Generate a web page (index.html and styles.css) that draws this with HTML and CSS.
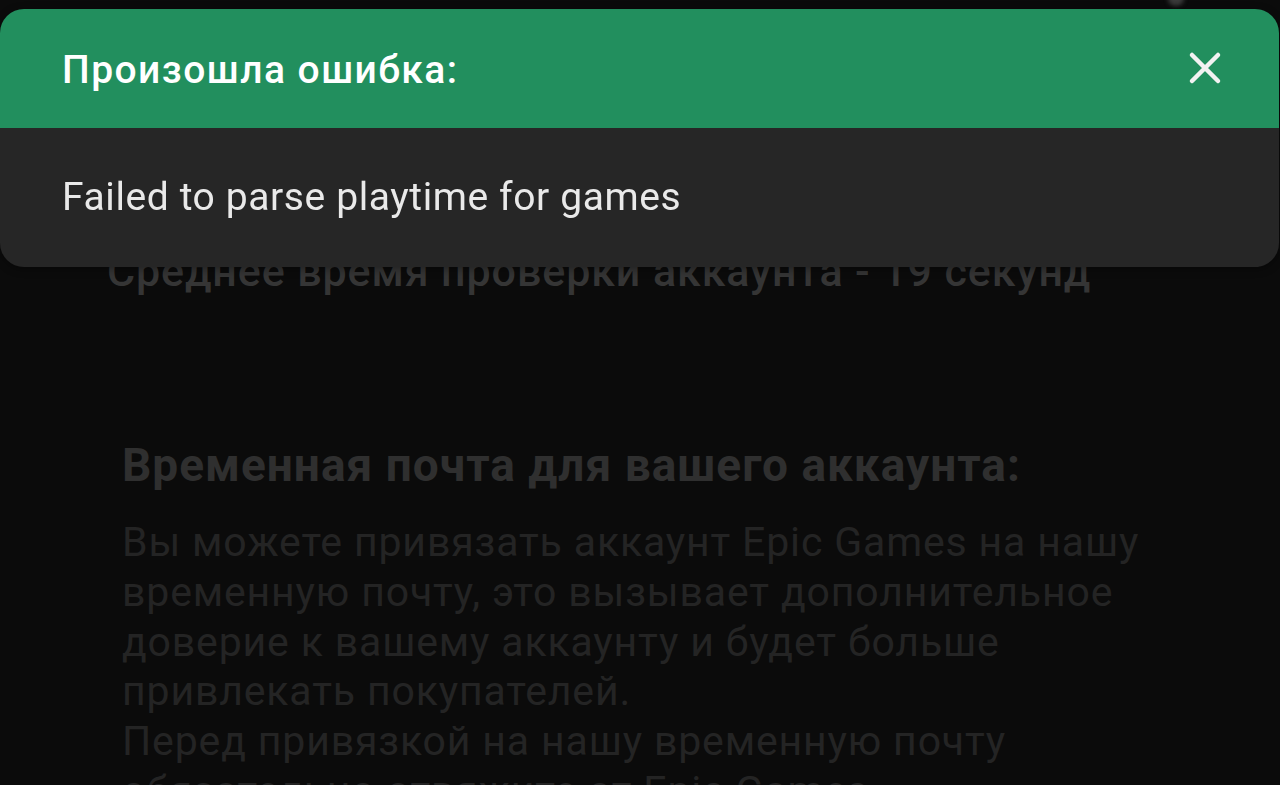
FILE: index.html
```html
<!DOCTYPE html>
<html lang="ru">
<head>
  <meta charset="UTF-8" />
  <meta name="viewport" content="width=device-width, initial-scale=1.0" />
  <title>Проверка аккаунта</title>
  <link rel="stylesheet" href="styles.css">
</head>
<body>
  <div class="camera"></div>

  <main class="page">
    <p class="avg-time">Среднее время проверки аккаунта - 19 секунд</p>

    <section class="mail-info">
      <h2>Временная почта для вашего аккаунта:</h2>
      <p>
        Вы можете привязать аккаунт Epic Games на нашу<br>
        временную почту, это вызывает дополнительное<br>
        доверие к вашему аккаунту и будет больше<br>
        привлекать покупателей.<br>
        Перед привязкой на нашу временную почту<br>
        обязательно отвяжите от Epic Games
      </p>
    </section>
  </main>

  <div class="toast">
    <div class="toast-head">
      <span class="toast-title">Произошла ошибка:</span>
      <button class="toast-close" type="button" aria-label="Закрыть">
        <svg width="34" height="34" viewBox="0 0 34 34">
          <path d="M4 4 L30 30 M30 4 L4 30" stroke="#f2f2f2" stroke-width="4.5" stroke-linecap="round" fill="none"/>
        </svg>
      </button>
    </div>
    <div class="toast-body">Failed to parse playtime for games</div>
  </div>
</body>
</html>
```

FILE: styles.css
```css
html, body {
  height: 100%;
}
body {
  margin: 0;
  background-color: #0b0b0b;
  font-family: Roboto, "Noto Sans", sans-serif;
  overflow: hidden;
}
.page {
  padding-top: 245px;
}
.avg-time {
  margin: 0 0 0 107px;
  font-size: 43px;
  font-weight: 500;
  letter-spacing: 0.9px;
  color: #353535;
  line-height: 52px;
  white-space: nowrap;
}
.mail-info {
  margin-top: 142px;
  padding-left: 122px;
}
.mail-info h2 {
  margin: 0;
  font-size: 46px;
  font-weight: 700;
  letter-spacing: 1px;
  color: #2f2f2f;
  line-height: 52px;
  white-space: nowrap;
}
.mail-info p {
  margin: 27px 0 0;
  font-size: 41px;
  font-weight: 400;
  letter-spacing: 0.85px;
  color: #242424;
  line-height: 49.8px;
  white-space: nowrap;
}
.camera {
  position: absolute;
  top: -8px;
  left: 1168px;
  width: 16px;
  height: 14px;
  border-radius: 50%;
  background-color: #3a3a3a;
  filter: blur(2px);
}
.toast {
  position: fixed;
  top: 9px;
  left: 0;
  right: 1px;
  border-radius: 24px;
  overflow: hidden;
  box-shadow: 0 2px 8px rgba(0, 0, 0, 0.4);
}
.toast-head {
  display: flex;
  align-items: center;
  justify-content: space-between;
  height: 119px;
  padding: 0 57px 0 62px;
  background-color: #228f5e;
}
.toast-title {
  color: #ffffff;
  font-size: 39px;
  font-weight: 500;
  letter-spacing: 1.45px;
  margin-top: 2px;
}
.toast-close {
  display: flex;
  padding: 0;
  margin-top: -2px;
  border: none;
  background: none;
  cursor: pointer;
}
.toast-body {
  height: 137px;
  display: flex;
  align-items: center;
  padding: 0 62px 2px;
  background-color: #262626;
  color: #e9e9e9;
  font-size: 39px;
  font-weight: 400;
  letter-spacing: 0.6px;
}
```
